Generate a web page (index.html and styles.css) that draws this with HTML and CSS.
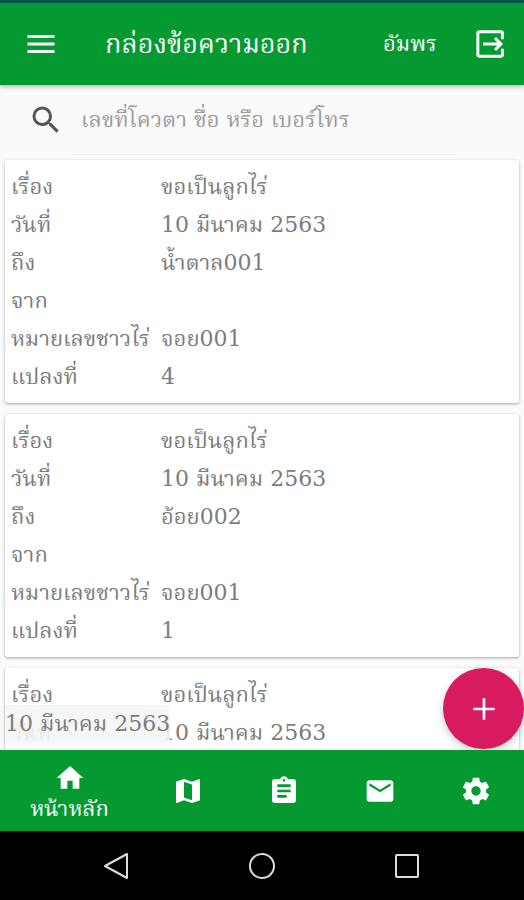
FILE: index.html
```html
<!DOCTYPE html>
<html lang="th">
<head>
<meta charset="utf-8">
<meta name="viewport" content="width=device-width, initial-scale=1">
<title>กล่องข้อความออก</title>
<link rel="stylesheet" href="styles.css">
</head>
<body>
<header class="topbar">
  <button class="icon-button" type="button" aria-label="เมนู">
    <svg class="icon icon-large" viewBox="0 0 24 24"><path d="M3 18h18v-2H3v2zm0-5h18v-2H3v2zm0-7v2h18V6H3z"/></svg>
  </button>
  <h1 class="title">กล่องข้อความออก</h1>
  <span class="user">อัมพร</span>
  <button class="icon-button" type="button" aria-label="ออกจากระบบ">
    <svg class="icon icon-large" viewBox="0 0 24 24"><path class="stroke" d="M20.300 8.800V5Q20.300 3.900 19.200 3.900H5Q3.900 3.900 3.900 5V19Q3.900 20.100 5 20.100H19.200Q20.300 20.100 20.300 19V15.200"/><path class="stroke" d="M7.500 12H19M15.300 8L19.300 12L15.300 16"/></svg>
  </button>
</header>

<main class="content">
  <form class="search">
    <label class="search-label" for="search" aria-label="ค้นหา">
      <svg class="icon icon-large" viewBox="0 0 24 24"><path d="M15.500 14h-.79l-.28-.27A6.471 6.471 0 0 0 16 9.500 6.500 6.500 0 1 0 9.500 16c1.610 0 3.090-.59 4.230-1.570l.27.28v.79l5 4.990L20.490 19l-4.990-5zm-6 0C7.010 14 5 11.990 5 9.500S7.010 5 9.500 5 14 7.010 14 9.500 11.990 14 9.500 14z"/></svg>
    </label>
    <input class="search-input" id="search" type="text" placeholder="เลขที่โควตา ชื่อ หรือ เบอร์โทร">
  </form>

  <div class="list">
    <dl class="card">
      <dt>เรื่อง</dt><dd>ขอเป็นลูกไร่</dd>
      <dt>วันที่</dt><dd>10 มีนาคม 2563</dd>
      <dt>ถึง</dt><dd>น้ำตาล001</dd>
      <dt>จาก</dt><dd></dd>
      <dt>หมายเลขชาวไร่</dt><dd>จอย001</dd>
      <dt>แปลงที่</dt><dd>4</dd>
    </dl>
    <dl class="card">
      <dt>เรื่อง</dt><dd>ขอเป็นลูกไร่</dd>
      <dt>วันที่</dt><dd>10 มีนาคม 2563</dd>
      <dt>ถึง</dt><dd>อ้อย002</dd>
      <dt>จาก</dt><dd></dd>
      <dt>หมายเลขชาวไร่</dt><dd>จอย001</dd>
      <dt>แปลงที่</dt><dd>1</dd>
    </dl>
    <dl class="card">
      <dt>เรื่อง</dt><dd>ขอเป็นลูกไร่</dd>
      <dt>วันที่</dt><dd>10 มีนาคม 2563</dd>
    </dl>
  </div>

  <div class="date-tag">10 มีนาคม 2563</div>
  <button class="fab" type="button" aria-label="เพิ่ม">
    <svg class="icon" viewBox="0 0 24 24"><path d="M20 13h-7v7h-2v-7H4v-2h7V4h2v7h7v2z"/></svg>
  </button>
</main>

<nav class="tabs">
  <a class="tab tab-active" href="#home">
    <svg class="icon" viewBox="0 0 24 24"><path d="M10 20v-6h4v6h5v-8h3L12 3 2 12h3v8z"/></svg>
    <span>หน้าหลัก</span>
  </a>
  <a class="tab" href="#map" aria-label="แผนที่">
    <svg class="icon" viewBox="0 0 24 24"><path d="M20.500 3l-.16.030L15 5.100 9 3 3.360 4.900c-.21.070-.36.250-.36.480V20.500c0 .28.220.5.500.5l.16-.03L9 18.900l6 2.100 5.640-1.900c.21-.07.360-.25.360-.48V3.500c0-.28-.22-.5-.5-.5zM15 19l-6-2.110V5l6 2.110V19z"/></svg>
  </a>
  <a class="tab" href="#tasks" aria-label="รายการ">
    <svg class="icon" viewBox="0 0 24 24"><path d="M19 3h-4.180C14.400 1.840 13.300 1 12 1c-1.300 0-2.400.84-2.820 2H5c-1.100 0-2 .9-2 2v14c0 1.100.9 2 2 2h14c1.100 0 2-.9 2-2V5c0-1.100-.9-2-2-2zm-7 0c.55 0 1 .45 1 1s-.45 1-1 1-1-.45-1-1 .45-1 1-1zm2 14H7v-2h7v2zm3-4H7v-2h10v2zm0-4H7V7h10v2z"/></svg>
  </a>
  <a class="tab" href="#mail" aria-label="ข้อความ">
    <svg class="icon" viewBox="0 0 24 24"><path d="M20 4H4c-1.100 0-1.990.9-1.990 2L2 18c0 1.100.9 2 2 2h16c1.100 0 2-.9 2-2V6c0-1.100-.9-2-2-2zm0 4l-8 5-8-5V6l8 5 8-5v2z"/></svg>
  </a>
  <a class="tab" href="#settings" aria-label="ตั้งค่า">
    <svg class="icon" viewBox="0 0 24 24"><path d="M19.430 12.980c.04-.32.070-.64.070-.98s-.03-.66-.07-.98l2.110-1.650c.19-.15.240-.42.120-.64l-2-3.460c-.12-.22-.39-.3-.61-.22l-2.490 1c-.52-.4-1.080-.73-1.690-.98l-.38-2.650C14.460 2.180 14.250 2 14 2h-4c-.25 0-.46.180-.49.420l-.38 2.650c-.61.250-1.170.59-1.690.98l-2.490-1c-.23-.09-.49 0-.61.220l-2 3.460c-.13.220-.07.490.12.640l2.110 1.650c-.04.320-.07.650-.07.980s.03.660.07.980l-2.110 1.650c-.19.150-.24.420-.12.640l2 3.460c.12.220.39.300.61.220l2.490-1c.52.400 1.080.73 1.690.98l.38 2.650c.03.240.24.420.49.420h4c.25 0 .46-.18.490-.42l.38-2.650c.61-.25 1.170-.59 1.690-.98l2.490 1c.23.090.49 0 .61-.22l2-3.460c.12-.22.070-.49-.12-.64l-2.110-1.650zM12 15.500c-1.930 0-3.500-1.570-3.500-3.500s1.570-3.500 3.500-3.500 3.500 1.570 3.500 3.500-1.570 3.500-3.500 3.500z"/></svg>
  </a>
</nav>

<footer class="system">
  <button class="system-button" type="button" aria-label="ย้อนกลับ"><svg class="outline" viewBox="0 0 28 28"><path d="M24 2V26L2 14Z"/></svg></button>
  <button class="system-button" type="button" aria-label="หน้าแรก"><svg class="outline" viewBox="0 0 28 28"><circle cx="14" cy="14" r="12"/></svg></button>
  <button class="system-button" type="button" aria-label="แอปล่าสุด"><svg class="outline" viewBox="0 0 28 28"><rect x="3" y="3" width="22" height="22" rx="1"/></svg></button>
</footer>
</body>
</html>
```
FILE: styles.css
```css
* {
  box-sizing: border-box;
}

body {
  display: flex;
  flex-direction: column;
  height: 100vh;
  margin: 0;
  background: #fafafa;
  color: #7c7c7c;
  font-family: "DejaVu Serif", "Noto Serif Thai", serif;
  font-size: 22px;
  font-weight: 400;
  line-height: 38px;
}

button {
  display: flex;
  align-items: center;
  justify-content: center;
  padding: 0;
  border: 0;
  background: none;
  color: inherit;
}

.icon {
  display: block;
  width: 32px;
  height: 32px;
  fill: currentColor;
}

.icon-large {
  width: 36px;
  height: 36px;
}

.stroke {
  fill: none;
  stroke: currentColor;
  stroke-width: 2;
}

.topbar {
  z-index: 1;
  display: flex;
  flex: none;
  align-items: center;
  height: 85px;
  padding: 0 16px 0 23px;
  border-top: 3px solid #00574b;
  background: #049a31;
  box-shadow: 0 1px 5px rgba(0, 0, 0, 0.35);
  color: #fff;
}

.title {
  flex: 1;
  margin: 0 0 0 46px;
  font-size: 27px;
  font-weight: 400;
}

.user {
  margin-right: 35px;
}

.content {
  position: relative;
  flex: 1;
  min-height: 0;
  overflow: hidden;
}

.search {
  display: flex;
  align-items: center;
  height: 70px;
  margin: 0 69px 5px 28px;
}

.search-label {
  margin-right: 7px;
  color: #555;
}

.search-input {
  flex: 1;
  min-width: 0;
  height: 70px;
  padding: 0 10px;
  border: 0;
  border-bottom: 1px solid #eee;
  outline: 0;
  background: none;
  color: inherit;
  font: inherit;
}

.search-input::placeholder {
  color: #9c9c9c;
  opacity: 1;
}

.list {
  display: grid;
  gap: 11px;
  padding: 0 5px;
}

.card {
  display: grid;
  grid-template-columns: 150px 1fr;
  grid-auto-rows: 38px;
  margin: 0;
  padding: 8px 6px 7px;
  border-radius: 3px;
  background: #fff;
  box-shadow: 0 1px 3px rgba(0, 0, 0, 0.35);
  white-space: nowrap;
}

.card dd {
  margin: 0;
}

.date-tag {
  position: absolute;
  bottom: 7px;
  left: 5px;
  background: rgba(245, 245, 245, 0.9);
}

.fab {
  position: absolute;
  right: 0;
  bottom: 1px;
  width: 81px;
  height: 81px;
  border-radius: 50%;
  background: #d81b60;
  box-shadow: 0 3px 8px rgba(0, 0, 0, 0.2);
  color: #fff;
}

.tabs {
  display: grid;
  flex: none;
  grid-template-columns: 139fr 97fr 96fr 96fr 96fr;
  height: 81px;
  background: #049a31;
}

.tab {
  display: flex;
  flex-direction: column;
  align-items: center;
  justify-content: center;
  color: #fff;
  text-decoration: none;
}

.tab-active {
  padding-top: 4px;
  line-height: 29px;
}

.system {
  display: grid;
  flex: none;
  grid-template-columns: repeat(3, 1fr);
  height: 69px;
  padding: 0 44px;
  background: #000;
  color: #ddd;
}

.outline {
  width: 28px;
  height: 28px;
  fill: none;
  stroke: currentColor;
  stroke-width: 2;
  stroke-linejoin: round;
}
```
